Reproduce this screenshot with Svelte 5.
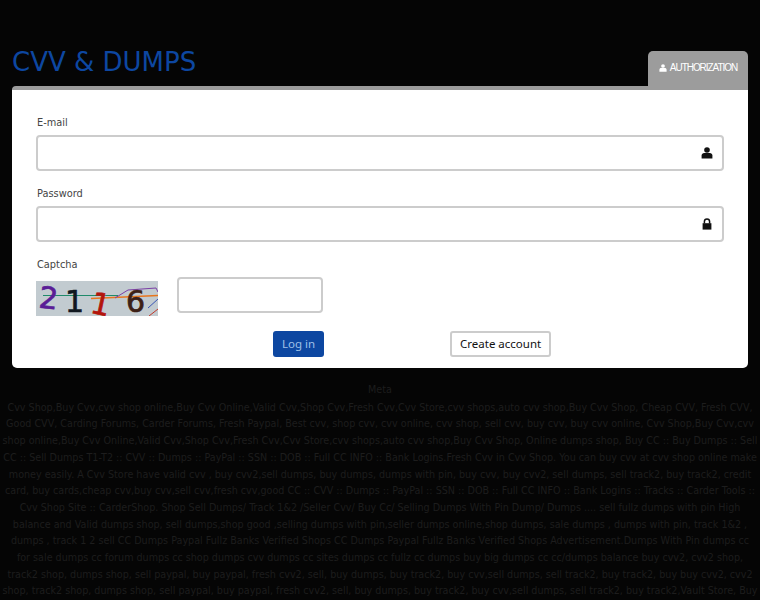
<script>
  const metaLines = [
    "Cvv Shop,Buy Cvv,cvv shop online,Buy Cvv Online,Valid Cvv,Shop Cvv,Fresh Cvv,Cvv Store,cvv shops,auto cvv shop,Buy Cvv Shop, Cheap CVV, Fresh CVV,",
    "Good CVV, Carding Forums, Carder Forums, Fresh Paypal, Best cvv, shop cvv, cvv online, cvv shop, sell cvv, buy cvv, buy cvv online, Cvv Shop,Buy Cvv,cvv",
    "shop online,Buy Cvv Online,Valid Cvv,Shop Cvv,Fresh Cvv,Cvv Store,cvv shops,auto cvv shop,Buy Cvv Shop, Online dumps shop, Buy CC :: Buy Dumps :: Sell",
    "CC :: Sell Dumps T1-T2 :: CVV :: Dumps :: PayPal :: SSN :: DOB :: Full CC INFO :: Bank Logins.Fresh Cvv in Cvv Shop. You can buy cvv at cvv shop online make",
    "money easily. A Cvv Store have valid cvv , buy cvv2,sell dumps, buy dumps, dumps with pin, buy cvv, buy cvv2, sell dumps, sell track2, buy track2, credit",
    "card, buy cards,cheap cvv,buy cvv,sell cvv,fresh cvv,good CC :: CVV :: Dumps :: PayPal :: SSN :: DOB :: Full CC INFO :: Bank Logins :: Tracks :: Carder Tools ::",
    "Cvv Shop Site :: CarderShop. Shop Sell Dumps/ Track 1&2 /Seller Cvv/ Buy Cc/ Selling Dumps With Pin Dump/ Dumps .... sell fullz dumps with pin High",
    "balance and Valid dumps shop, sell dumps,shop good ,selling dumps with pin,seller dumps online,shop dumps, sale dumps , dumps with pin, track 1&2 ,",
    "dumps , track 1 2 sell CC Dumps Paypal Fullz Banks Verified Shops CC Dumps Paypal Fullz Banks Verified Shops Advertisement.Dumps With Pin dumps cc",
    "for sale dumps cc forum dumps cc shop dumps cvv dumps cc sites dumps cc fullz cc dumps buy big dumps cc cc/dumps balance buy cvv2, cvv2 shop,",
    "track2 shop, dumps shop, sell paypal, buy paypal, fresh cvv2, sell, buy dumps, buy track2, buy cvv,sell dumps, sell track2, buy track2, buy buy cvv2, cvv2",
    "shop, track2 shop, dumps shop, sell paypal, buy paypal, fresh cvv2, sell, buy dumps, buy track2, buy cvv,sell dumps, sell track2, buy track2,Vault Store, Buy"
  ];
</script>

{#snippet userIcon(color)}
  <svg class="icon" viewBox="0 0 12 12" fill={color}>
    <circle cx="6" cy="3" r="2.8" />
    <path d="M0.6 11.5V8.6C0.6 7 1.8 6 3.2 6H8.8C10.2 6 11.4 7 11.4 8.6V11.5Z" />
  </svg>
{/snippet}

<div class="page">
  <header class="top">
    <h1>CVV &amp; DUMPS</h1>
    <div class="tab">
      {@render userIcon("#fff")}
      <span>AUTHORIZATION</span>
    </div>
  </header>

  <main class="card">
    <div class="label">E-mail</div>
    <div class="field">
      <span class="input-icon">{@render userIcon("#111")}</span>
    </div>

    <div class="label">Password</div>
    <div class="field">
      <span class="input-icon">
        <svg class="icon" viewBox="0 0 12 12" fill="#111">
          <path d="M1.6 5.2H10.4V11.6H1.6Z" />
          <path d="M3.4 5.4V3.6C3.4 2 4.6 1 6 1S8.6 2 8.6 3.6V5.4" fill="none" stroke="#111" stroke-width="1.5" />
        </svg>
      </span>
    </div>

    <div class="label">Captcha</div>
    <div class="captcha-row">
      <svg class="captcha" viewBox="0 0 122 35" width="122" height="35">
        <rect width="122" height="35" fill="#c2cbd0" />
        <path d="M7 14.5H82" stroke="#1f8a6a" stroke-width="1" fill="none" />
        <path d="M55 17.5L122 14.5" stroke="#e8761e" stroke-width="1.4" fill="none" />
        <path d="M79 17L92 9L120 7L122 11" stroke="#7b3fa5" stroke-width="1" fill="none" />
        <path d="M112 27L122 18" stroke="#3a56b5" stroke-width="1" fill="none" />
        <path d="M113 35L122 28" stroke="#c0392b" stroke-width="1" fill="none" />
        <text x="3" y="27" class="digit" fill="#5a1d96" stroke="#5a1d96" transform="rotate(6 8 18)">2</text>
        <text x="29" y="31" class="digit" fill="#10181f" stroke="#10181f">1</text>
        <text x="56" y="34" class="digit" fill="#b3150c" stroke="#b3150c" transform="rotate(12 66 20)">1</text>
        <text x="90" y="31" class="digit" fill="#3d2016" stroke="#3d2016">6</text>
      </svg>
      <div class="field captcha-input"></div>
    </div>

    <div class="actions">
      <button class="btn primary">Log in</button>
      <button class="btn">Create account</button>
    </div>
  </main>

  <footer class="meta">
    <div class="meta-title">Meta</div>
    {#each metaLines as line}
      <div class="line">{line}</div>
    {/each}
  </footer>
</div>

<style>
  :global(body) {
    margin: 0;
    background: #050505;
  }

  .page {
    width: 760px;
    height: 600px;
    overflow: hidden;
    font-family: "DejaVu Sans", sans-serif;
  }

  .top {
    display: flex;
    justify-content: space-between;
    align-items: flex-end;
    padding: 51px 12px 0;
    height: 35px;
  }

  h1 {
    margin: 0 0 8px;
    font-size: 26px;
    line-height: 32px;
    font-weight: 400;
    color: #0d47a1;
  }

  .tab {
    width: 100px;
    height: 35px;
    box-sizing: border-box;
    display: flex;
    align-items: center;
    justify-content: center;
    gap: 3px;
    padding-bottom: 2px;
    background: #9c9c9c;
    border-radius: 5px 5px 0 0;
    color: #fff;
    font-family: "Liberation Sans", sans-serif;
    font-size: 10px;
    letter-spacing: -1.05px;
  }

  .tab .icon {
    width: 8px;
    height: 8px;
  }

  .card {
    margin: 0 12px;
    height: 282px;
    box-sizing: border-box;
    padding: 26px 24px 0 24px;
    background: #fff;
    border-top: 4px solid #9c9c9c;
    border-radius: 4px 0 5px 5px;
  }

  .label {
    font-size: 9.8px;
    line-height: 13px;
    color: #444;
    margin: 0 1px 6px;
  }

  .field {
    height: 36px;
    box-sizing: border-box;
    border: 2px solid #ccc;
    border-radius: 4px;
    background: #fff;
    display: flex;
    align-items: center;
    justify-content: flex-end;
    padding-right: 9px;
    margin-bottom: 16px;
  }

  .input-icon {
    display: flex;
  }

  .icon {
    width: 12px;
    height: 12px;
    display: block;
  }

  .captcha-row {
    display: flex;
    align-items: flex-start;
    gap: 19px;
  }

  .captcha {
    margin-top: 4px;
    display: block;
  }

  .digit {
    font-family: "DejaVu Sans", sans-serif;
    font-size: 30px;
    stroke-width: 0.7px;
  }

  .captcha-input {
    width: 146px;
    margin: 0;
  }

  .actions {
    display: flex;
    gap: 126px;
    padding-left: 237px;
    margin-top: 15px;
  }

  .btn {
    height: 26px;
    box-sizing: border-box;
    padding: 0 8px 2px;
    border: 2px solid #ccc;
    border-radius: 3px;
    background: #fff;
    color: #111;
    font-family: "Noto Sans", sans-serif;
    font-size: 11.5px;
    white-space: nowrap;
  }

  .btn.primary {
    width: 51px;
    padding: 0 0 2px;
    background: #0d47a1;
    border: none;
    color: #9fc0e8;
  }

  .meta {
    padding-top: 14px;
    text-align: center;
    font-size: 9.6px;
    line-height: 16.7px;
    color: #1d1d1d;
    white-space: nowrap;
  }

  .meta-title {
    margin-bottom: 1px;
  }
</style>
